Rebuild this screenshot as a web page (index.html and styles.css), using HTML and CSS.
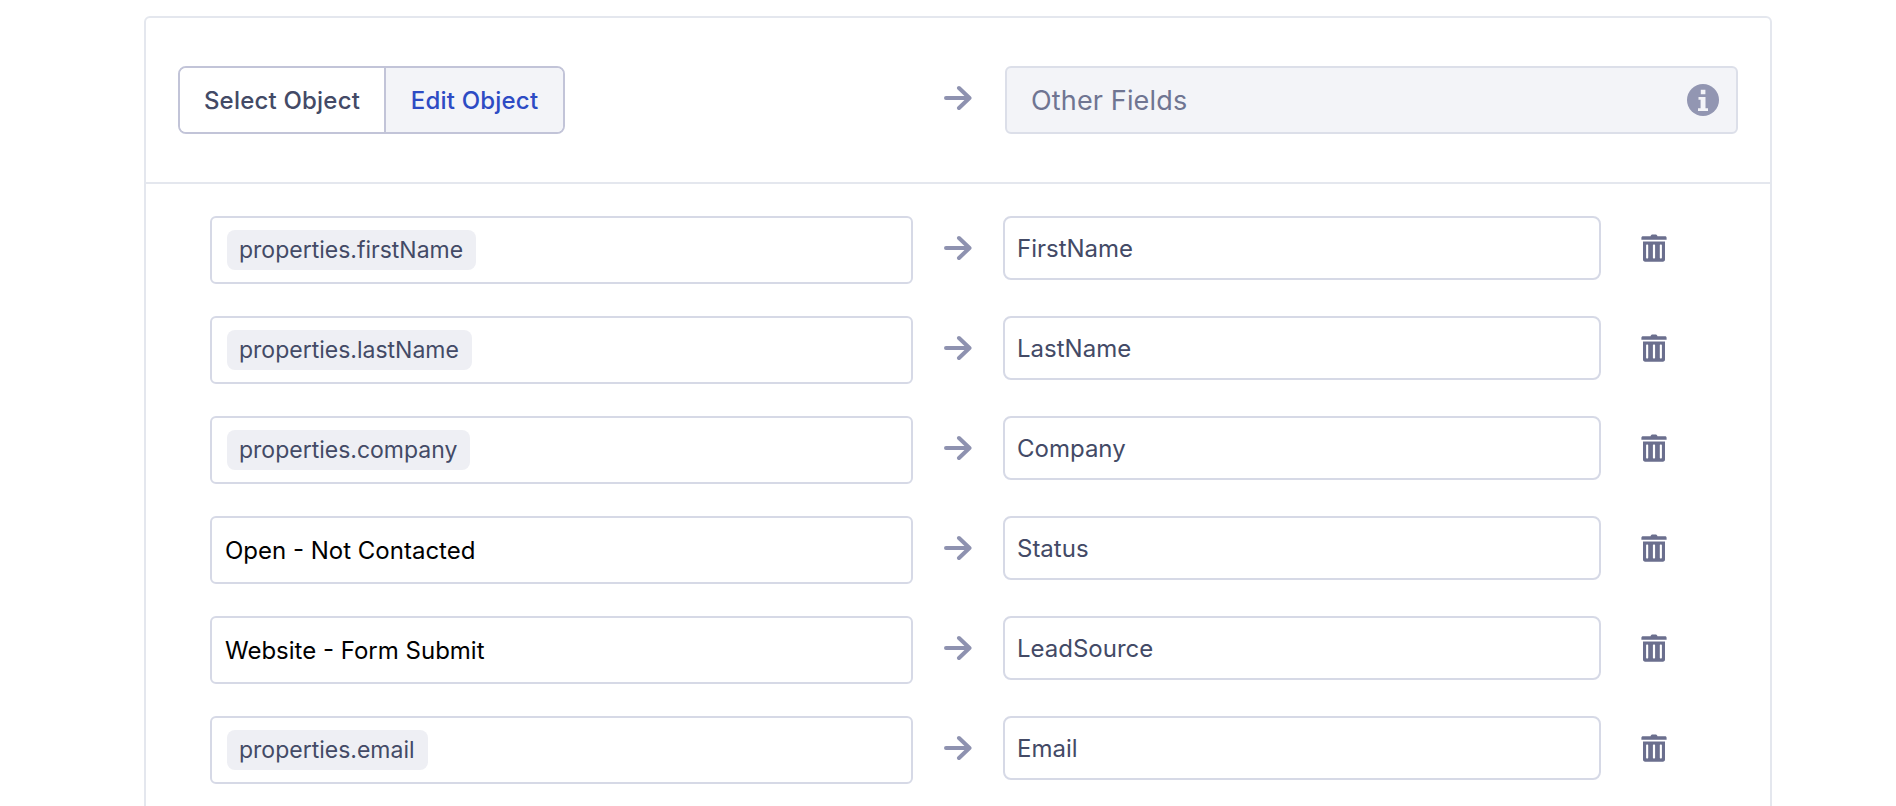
FILE: index.html
```html
<!DOCTYPE html>
<html lang="en">
<head>
<meta charset="utf-8">
<title>Field mapping</title>
<link rel="stylesheet" href="styles.css">
</head>
<body>
<svg class="defs" width="0" height="0" aria-hidden="true">
  <symbol id="arrow" viewBox="0 0 28 26">
    <path d="M2 13H25M15 3 25.500 13 15 23" fill="none" stroke="currentColor" stroke-width="4" stroke-linecap="round" stroke-linejoin="round"/>
  </symbol>
  <symbol id="trash" viewBox="0 0 26 28">
    <path fill="currentColor" fill-rule="evenodd" d="M9.500 2.200C9.800 1 10.600.4 11.600.4h2.800c1 0 1.800.6 2.100 1.800H24c1 0 1.600.6 1.600 1.500v2H.4v-2c0-.9.6-1.500 1.600-1.500zM2 7.600h22v18c0 1.300-.9 2.100-2.100 2.100H4.100C2.900 27.700 2 26.900 2 25.600zM6.200 10.500c-.7 0-1.100.4-1.100 1v12c0 .6.400 1 1.100 1s1-.4 1-1v-12c0-.6-.4-1-1-1zm6.800 0c-.7 0-1.100.4-1.100 1v12c0 .6.400 1 1.100 1s1.100-.4 1.100-1v-12c0-.6-.4-1-1.100-1zm6.800 0c-.6 0-1 .4-1 1v12c0 .6.400 1 1 1 .7 0 1.100-.4 1.100-1v-12c0-.6-.4-1-1.100-1z"/>
  </symbol>
</svg>
<main class="card">
  <header class="card-head">
    <div class="toggle">
      <button class="toggle-btn" type="button">Select Object</button>
      <button class="toggle-btn is-active" type="button">Edit Object</button>
    </div>
    <svg class="arrow"><use href="#arrow"/></svg>
    <div class="target-head">
      <span>Other Fields</span>
      <svg class="info" viewBox="0 0 32 32" aria-hidden="true">
        <circle cx="16" cy="16" r="16" fill="currentColor"/>
        <path fill="#f3f4f8" d="M13.800 5.800h4.600v4.400h-4.600zM11.500 13h7v11.200h2.500v2.800H11v-2.800h2.600v-8.400h-2.100z"/>
      </svg>
    </div>
  </header>
  <section class="rows">
    <div class="row">
      <div class="source"><span class="chip">properties.firstName</span></div>
      <svg class="arrow"><use href="#arrow"/></svg>
      <div class="target">FirstName</div>
      <svg class="trash"><use href="#trash"/></svg>
    </div>
    <div class="row">
      <div class="source"><span class="chip">properties.lastName</span></div>
      <svg class="arrow"><use href="#arrow"/></svg>
      <div class="target">LastName</div>
      <svg class="trash"><use href="#trash"/></svg>
    </div>
    <div class="row">
      <div class="source"><span class="chip">properties.company</span></div>
      <svg class="arrow"><use href="#arrow"/></svg>
      <div class="target">Company</div>
      <svg class="trash"><use href="#trash"/></svg>
    </div>
    <div class="row">
      <div class="source source-text">Open - Not Contacted</div>
      <svg class="arrow"><use href="#arrow"/></svg>
      <div class="target">Status</div>
      <svg class="trash"><use href="#trash"/></svg>
    </div>
    <div class="row">
      <div class="source source-text">Website - Form Submit</div>
      <svg class="arrow"><use href="#arrow"/></svg>
      <div class="target">LeadSource</div>
      <svg class="trash"><use href="#trash"/></svg>
    </div>
    <div class="row">
      <div class="source"><span class="chip">properties.email</span></div>
      <svg class="arrow"><use href="#arrow"/></svg>
      <div class="target">Email</div>
      <svg class="trash"><use href="#trash"/></svg>
    </div>
  </section>
</main>
</body>
</html>
```
FILE: styles.css
```css
* {
  box-sizing: border-box;
}

html,
body {
  height: 100%;
}

body {
  margin: 0;
  padding: 16px 124px 0 144px;
  overflow: hidden;
  background: #fff;
  color: #434a66;
  font-family: Inter, "Liberation Sans", sans-serif;
}

.defs {
  display: block;
  height: 0;
}

.card {
  height: 900px;
  border: 2px solid #e4e7ee;
  border-radius: 6px;
}

.card-head {
  display: flex;
  align-items: center;
  height: 166px;
  padding: 48px 32px;
  border-bottom: 2px solid #e4e7ee;
}

.toggle {
  display: flex;
  width: 387px;
  height: 68px;
  border: 2px solid #c2c4d8;
  border-radius: 8px;
  overflow: hidden;
}

.toggle-btn {
  padding: 0;
  border: 0;
  background: #fff;
  color: #434a66;
  font: 450 24px Inter, "Liberation Sans", sans-serif;
  letter-spacing: 0.2px;
}

.toggle-btn:first-child {
  flex: 0 0 206px;
  border-right: 2px solid #c2c4d8;
}

.toggle-btn.is-active {
  flex: 1;
  background: #f3f4f8;
  color: #2d4bc4;
}

.arrow {
  flex: none;
  width: 28px;
  height: 26px;
  color: #8e92b0;
}

.card-head .arrow {
  margin: 0 33px 4px 379px;
}

.target-head {
  display: flex;
  flex: 1;
  align-items: center;
  justify-content: space-between;
  height: 68px;
  padding: 0 17px 0 24px;
  border: 2px solid #dcdfe9;
  border-radius: 6px;
  background: #f3f4f8;
  color: #6f7592;
  font-size: 27px;
  letter-spacing: 0.15px;
}

.info {
  width: 32px;
  height: 32px;
  color: #9296b2;
}

.rows {
  display: flex;
  flex-direction: column;
  gap: 32px;
  padding: 32px 0 0 64px;
}

.row {
  display: flex;
  align-items: flex-start;
  height: 68px;
}

.row .arrow {
  margin: 19px 31px 0 31px;
}

.source {
  display: flex;
  flex: none;
  align-items: center;
  width: 703px;
  height: 68px;
  padding: 0 13px;
  border: 2px solid #d6d9e6;
  border-radius: 6px;
}

.source-text {
  color: #000;
  font-size: 24px;
}

.chip {
  display: flex;
  align-items: center;
  height: 40px;
  margin-left: 2px;
  padding: 0 13px 0 12px;
  border-radius: 8px;
  background: #eeeff4;
  font-size: 23px;
}

.target {
  display: flex;
  flex: none;
  align-items: center;
  width: 598px;
  height: 64px;
  padding: 0 12px;
  border: 2px solid #d6d9e6;
  border-radius: 8px;
  font-size: 24px;
}

.trash {
  flex: none;
  width: 26px;
  height: 28px;
  margin: 18px 0 0 40px;
  color: #6b6f8e;
}
```
